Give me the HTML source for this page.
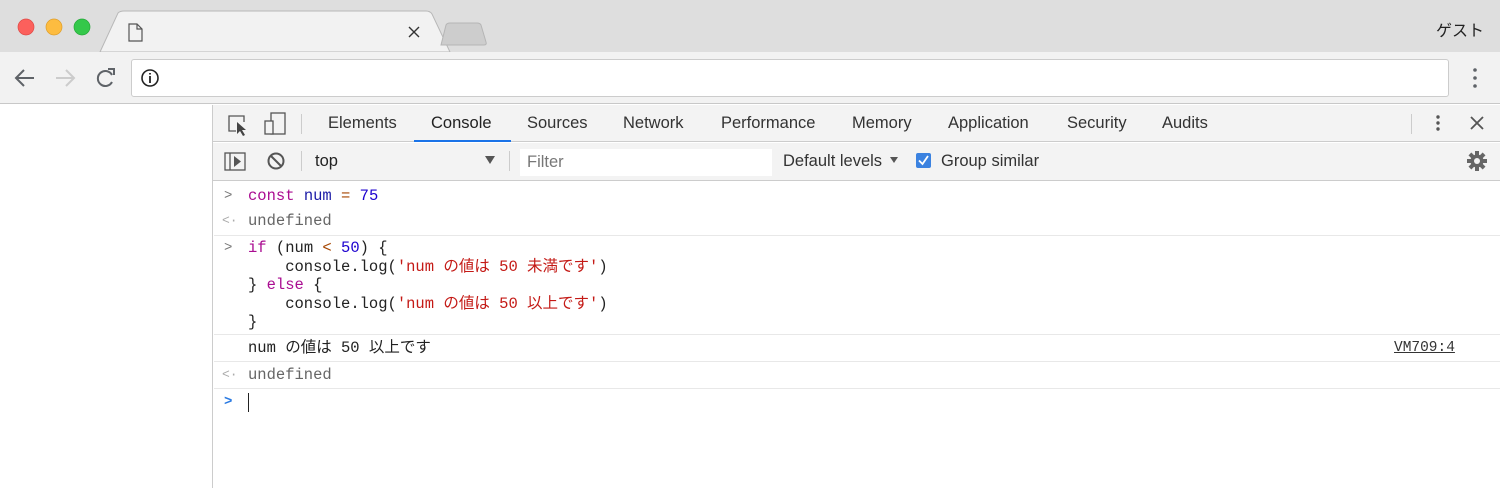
<!DOCTYPE html>
<html><head><meta charset="utf-8"><style>
*{margin:0;padding:0;box-sizing:border-box}
body{width:1500px;height:488px;overflow:hidden;background:#fff;font-family:"Liberation Sans","Noto Sans CJK JP",sans-serif;position:relative}
.abs{position:absolute}
.mono{font-family:"Liberation Mono","Noto Sans CJK JP",monospace;font-size:15.5px;white-space:pre;line-height:18.5px}
.tab{position:absolute;top:114px;font-size:16.5px;color:#333}
.sep{position:absolute;left:214px;right:0;height:1px;background:#e8e8e8}
</style></head><body>
<div class="abs" style="left:0;top:0;width:1500px;height:52px;background:#dedede"></div>
<svg class="abs" style="left:0;top:0" width="1500" height="53">
<path d="M100 52 L118 13 Q120 11 124 11 L426 11 Q430 11 432 14 L450 52 Z" fill="#f2f2f2" stroke="#b8b8b8"/>
<path d="M441 45 L446 25 Q447 23 450 23 L477 23 Q480 23 481 25 L486 42 Q487 45 484 45 Z" fill="#cdcdcd" stroke="#b5b5b5"/>
<circle cx="26" cy="27" r="8" fill="#fc605c" stroke="#de4a46" stroke-width=".7"/>
<circle cx="54" cy="27" r="8" fill="#fdbc40" stroke="#de9e2b" stroke-width=".7"/>
<circle cx="82" cy="27" r="8" fill="#34c84a" stroke="#27a83a" stroke-width=".7"/>
<path d="M129 24 L137 24 L142 29 L142 41 L129 41 Z M137 24 L137 29 L142 29" fill="none" stroke="#555" stroke-width="1.2"/>
<path d="M409 27 L419 37 M419 27 L409 37" stroke="#333" stroke-width="1.4"/>
</svg>
<div class="abs" style="right:16px;top:17px;font-size:16px;color:#222">ゲスト</div>
<div class="abs" style="left:0;top:52px;width:1500px;height:52px;background:#f2f2f2;border-bottom:1px solid #c8c8c8"></div>
<div class="abs" style="left:131px;top:59px;width:1318px;height:38px;background:#fff;border:1px solid #ccc;border-radius:3px"></div>
<svg class="abs" style="left:0;top:52px" width="1500" height="52">
<path d="M34 26 L16 26 M24 18 L16 26 L24 34" fill="none" stroke="#5f6368" stroke-width="2"/>
<path d="M56 26 L74 26 M66 18 L74 26 L66 34" fill="none" stroke="#ccc" stroke-width="2"/>
<path d="M112 23 A7.5 7.5 0 1 0 112 30" fill="none" stroke="#5f6368" stroke-width="2"/>
<path d="M108 17 L114 17 L114 23" fill="none" stroke="#5f6368" stroke-width="2"/>
<circle cx="150" cy="26" r="8" fill="none" stroke="#222" stroke-width="1.6"/>
<path d="M150 24 L150 31 M150 21 L150 22.5" stroke="#222" stroke-width="1.8"/>
<circle cx="1475" cy="18" r="1.8" fill="#5f6368"/><circle cx="1475" cy="26" r="1.8" fill="#5f6368"/><circle cx="1475" cy="34" r="1.8" fill="#5f6368"/>
</svg>
<div class="abs" style="left:212px;top:105px;width:1px;height:383px;background:#ccc"></div>
<div class="abs" style="left:213px;top:105px;width:1287px;height:37px;background:#f3f3f3;border-bottom:1px solid #ccc"></div>
<div class="abs" style="left:213px;top:143px;width:1287px;height:38px;background:#f3f3f3;border-bottom:1px solid #ccc"></div>
<div class="abs" style="left:414px;top:140px;width:97px;height:2px;background:#1a73e8"></div>
<div class="tab" style="left:328px">Elements</div>
<div class="tab" style="left:431px;color:#222">Console</div>
<div class="tab" style="left:527px">Sources</div>
<div class="tab" style="left:623px">Network</div>
<div class="tab" style="left:721px">Performance</div>
<div class="tab" style="left:852px">Memory</div>
<div class="tab" style="left:948px">Application</div>
<div class="tab" style="left:1067px">Security</div>
<div class="tab" style="left:1162px">Audits</div>
<svg class="abs" style="left:213px;top:105px" width="1287" height="76">
<path d="M23 26 L16 26 L16 11 L31 11 L31 17" fill="none" stroke="#555" stroke-width="1.3"/>
<path d="M24 17 L24 29 L27 26 L30 31 L32 30 L29 25 L33 25 Z" fill="#444"/>
<rect x="58" y="8" width="14" height="21" fill="none" stroke="#555" stroke-width="1.3"/>
<rect x="52" y="16" width="8" height="13" fill="#f3f3f3" stroke="#555" stroke-width="1.3"/>
<rect x="88" y="9" width="1" height="20" fill="#ccc"/>
<rect x="1198" y="9" width="1" height="20" fill="#ccc"/>
<circle cx="1225" cy="12" r="1.7" fill="#555"/><circle cx="1225" cy="18" r="1.7" fill="#555"/><circle cx="1225" cy="24" r="1.7" fill="#555"/>
<path d="M1258 12 L1270 24 M1270 12 L1258 24" stroke="#555" stroke-width="1.8"/>
<rect x="12" y="48" width="20" height="17" fill="none" stroke="#555" stroke-width="1.3"/>
<path d="M17 48 L17 65" stroke="#555" stroke-width="1.3"/><path d="M21 51 L28 56.5 L21 62 Z" fill="#555"/>
<circle cx="63" cy="56" r="7.5" fill="none" stroke="#555" stroke-width="2"/><path d="M58 51 L68 61" stroke="#555" stroke-width="2"/>
<rect x="88" y="46" width="1" height="20" fill="#ccc"/>
<rect x="296" y="46" width="1" height="20" fill="#ccc"/>
<path d="M272 51 L282 51 L277 59 Z" fill="#555"/>
<path d="M677 52 L685 52 L681 58 Z" fill="#555"/>
<rect x="703" y="48" width="15" height="15" rx="2" fill="#3b82e0"/>
<path d="M706 55.5 L709.5 59 L715 51" fill="none" stroke="#fff" stroke-width="1.8"/>
<g transform="translate(1264 56)" fill="#666"><circle r="6.5"/><g><rect x="-2" y="-10" width="4" height="20"/><rect x="-10" y="-2" width="20" height="4"/><rect x="-2" y="-10" width="4" height="20" transform="rotate(45)"/><rect x="-2" y="-10" width="4" height="20" transform="rotate(-45)"/></g><circle r="3" fill="#f3f3f3"/></g>
</svg>
<div class="abs" style="left:315px;top:152px;font-size:16.5px;color:#222">top</div>
<div class="abs" style="left:520px;top:149px;width:252px;height:27px;background:#fff"></div>
<div class="abs" style="left:527px;top:153px;font-size:16.5px;color:#777">Filter</div>
<div class="abs" style="left:783px;top:152px;font-size:16.5px;color:#333">Default levels</div>
<div class="abs" style="left:941px;top:152px;font-size:16.5px;color:#333">Group similar</div>
<div class="sep" style="top:235px"></div>
<div class="sep" style="top:334px"></div>
<div class="sep" style="top:361px"></div>
<div class="sep" style="top:388px"></div>
<div class="abs mono" style="left:224px;top:187px;color:#777;font-size:14px">&gt;</div>
<div class="abs mono" style="left:248px;top:187px"><span style="color:#aa0d91">const</span> <span style="color:#1a1aa6">num</span> <span style="color:#a64500">=</span> <span style="color:#1c00cf">75</span></div>
<div class="abs mono" style="left:222px;top:212px;color:#aaa;font-size:13px">&lt;·</div>
<div class="abs mono" style="left:248px;top:212px;color:#666">undefined</div>
<div class="abs mono" style="left:224px;top:239px;color:#777;font-size:14px">&gt;</div>
<div class="abs mono" style="left:248px;top:239px;color:#222"><span style="color:#aa0d91">if</span> (num <span style="color:#a64500">&lt;</span> <span style="color:#1c00cf">50</span>) {
    console.log(<span style="color:#c41a16">'num の値は 50 未満です'</span>)
} <span style="color:#aa0d91">else</span> {
    console.log(<span style="color:#c41a16">'num の値は 50 以上です'</span>)
}</div>
<div class="abs mono" style="left:248px;top:339px;color:#222">num の値は 50 以上です</div>
<div class="abs mono" style="left:1394px;top:339px;color:#333;text-decoration:underline;font-size:14.5px">VM709:4</div>
<div class="abs mono" style="left:222px;top:366px;color:#aaa;font-size:13px">&lt;·</div>
<div class="abs mono" style="left:248px;top:366px;color:#666">undefined</div>
<div class="abs mono" style="left:224px;top:393px;color:#2a7ae2;font-size:14px;font-weight:bold">&gt;</div>
<div class="abs" style="left:248px;top:393px;width:1px;height:19px;background:#222"></div>
</body></html>
